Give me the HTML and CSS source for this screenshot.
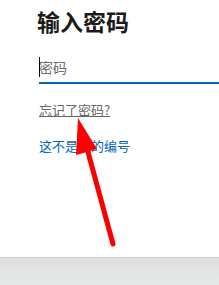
FILE: index.html
```html
<!DOCTYPE html>
<html lang="zh-CN">
<head>
    <meta charset="UTF-8">
    <meta name="viewport" content="width=device-width, initial-scale=1.0">
    <title>输入密码</title>
    <link rel="stylesheet" href="styles.css">
</head>
<body>
    <div class="panel">
        <h1 class="title">输入密码</h1>

        <div class="field">
            <input type="password" class="pwd-input" placeholder="密码">
            <span class="caret"></span>
        </div>

        <a href="#" class="link-forgot">忘记了密码?</a>
        <a href="#" class="link-other">这不是我的编号</a>
    </div>

    <div class="footer-bar"></div>

    <!-- annotation arrow -->
    <svg class="arrow" width="219" height="285" viewBox="0 0 219 285">
        <line x1="113" y1="244" x2="88" y2="152" stroke="#fb0000" stroke-width="5" stroke-linecap="round"/>
        <polygon points="78,118 76,155 97,149" fill="#fb0000"/>
    </svg>
</body>
</html>
```

FILE: styles.css
```css
body {
    margin: 0;
    background: #fff;
    font-family: "Noto Sans CJK SC", "Noto Sans", sans-serif;
    position: relative;
    width: 219px;
    height: 285px;
    overflow: hidden;
}

.panel {
    height: 257px;
    padding: 10px 0 0 39px;
    box-sizing: border-box;
}

.title {
    margin: 0 0 0 -2px;
    font-size: 23px;
    line-height: 23px;
    font-weight: 700;
    color: #1b1b1b;
}

.field {
    position: relative;
    margin-top: 24px;
}

.pwd-input {
    display: block;
    width: 100%;
    box-sizing: border-box;
    border: none;
    border-bottom: 2px solid #0067b8;
    padding: 0 0 5px 0;
    font-family: inherit;
    font-size: 14px;
    line-height: 20px;
    height: 27px;
    outline: none;
    background: transparent;
    caret-color: transparent;
}

.pwd-input::placeholder {
    color: #6e6e6e;
}

.caret {
    position: absolute;
    left: 0;
    top: 0;
    width: 1px;
    height: 20px;
    background: #000;
}

.link-forgot,
.link-other {
    display: block;
    font-size: 13px;
    line-height: 20px;
}

.link-forgot {
    margin-top: 16px;
    color: #666;
    text-decoration: underline;
    width: max-content;
}

.link-other {
    margin-top: 16px;
    color: #0067b8;
    text-decoration: none;
}

.footer-bar {
    height: 28px;
    border-top: 1px solid #cdcfce;
    background: linear-gradient(#dfe1e0, #e7e9e8);
    box-sizing: border-box;
}

.arrow {
    position: absolute;
    left: 0;
    top: 0;
    pointer-events: none;
}
```
